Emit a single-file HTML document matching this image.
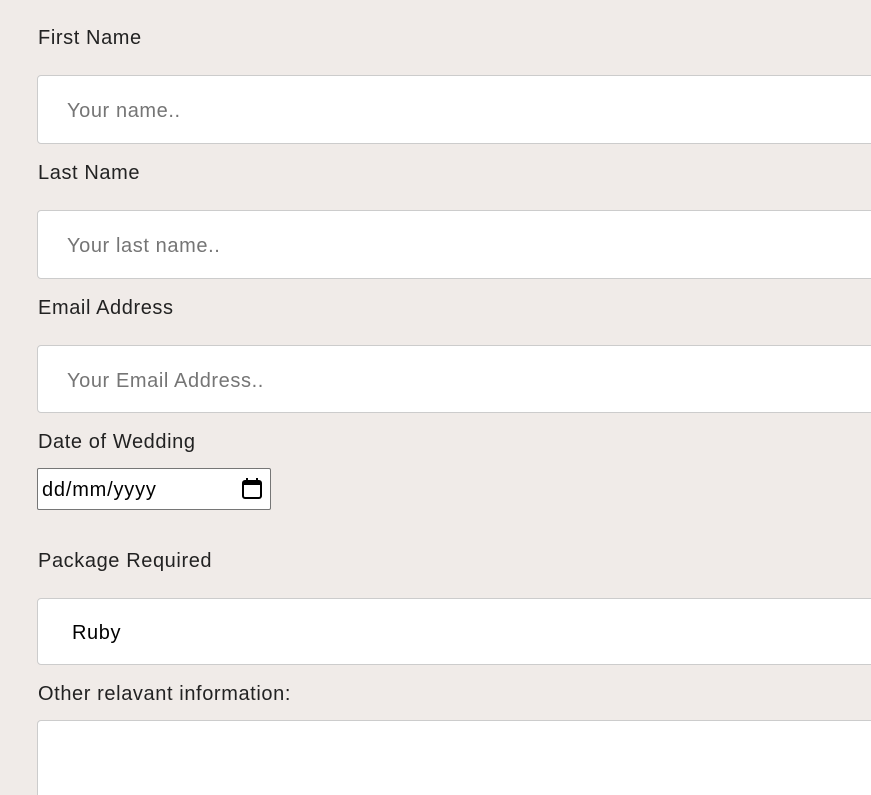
<!DOCTYPE html>
<html style="overflow:hidden;height:795px"><head><style>
body{margin:0;width:871px;height:795px;overflow:hidden;background:#f0ebe8;font-family:"Liberation Sans",sans-serif;position:relative}
.l{position:absolute;left:38px;font-size:20px;color:#222;line-height:24px;letter-spacing:0.6px}
.b{position:absolute;left:37px;width:900px;background:#fff;border:1px solid #ccc;border-radius:4px;box-sizing:border-box;overflow:hidden}
.p{position:absolute;left:29px;font-size:20px;color:#757575;line-height:24px;letter-spacing:0.6px}
</style></head><body>
<div class="l" style="top:26px">First Name</div>
<div class="b" style="top:75px;height:69px"><span class="p" style="top:23px">Your name..</span></div>
<div class="l" style="top:161px">Last Name</div>
<div class="b" style="top:210px;height:69px"><span class="p" style="top:23px">Your last name..</span></div>
<div class="l" style="top:296px">Email Address</div>
<div class="b" style="top:345px;height:68px"><span class="p" style="top:23px">Your Email Address..</span></div>
<div class="l" style="top:430px">Date of Wedding</div>
<div style="position:absolute;left:37px;top:468px;width:234px;height:42px;box-sizing:border-box;border:1px solid #767676;border-radius:2px;background:#fff">
<span style="position:absolute;left:4px;top:9px;font-size:20px;color:#000;line-height:24px;letter-spacing:0.8px">dd/mm/yyyy</span>
<svg style="position:absolute;left:203px;top:8px" width="22" height="24" viewBox="0 0 22 24"><rect x="2" y="4" width="18" height="17" rx="2" fill="none" stroke="#000" stroke-width="2"/><rect x="2" y="4" width="18" height="4" fill="#000"/><rect x="5" y="1" width="2" height="4" fill="#000"/><rect x="15" y="1" width="2" height="4" fill="#000"/></svg>
</div>
<div class="l" style="top:549px">Package Required</div>
<div class="b" style="top:598px;height:67px"><span style="position:absolute;left:34px;top:22px;font-size:20px;color:#000;line-height:24px;letter-spacing:0.6px">Ruby</span></div>
<div class="l" style="top:682px">Other relavant information:</div>
<div class="b" style="top:720px;height:75px;border-bottom:none;border-radius:4px 0 0 0"></div>
</body></html>
